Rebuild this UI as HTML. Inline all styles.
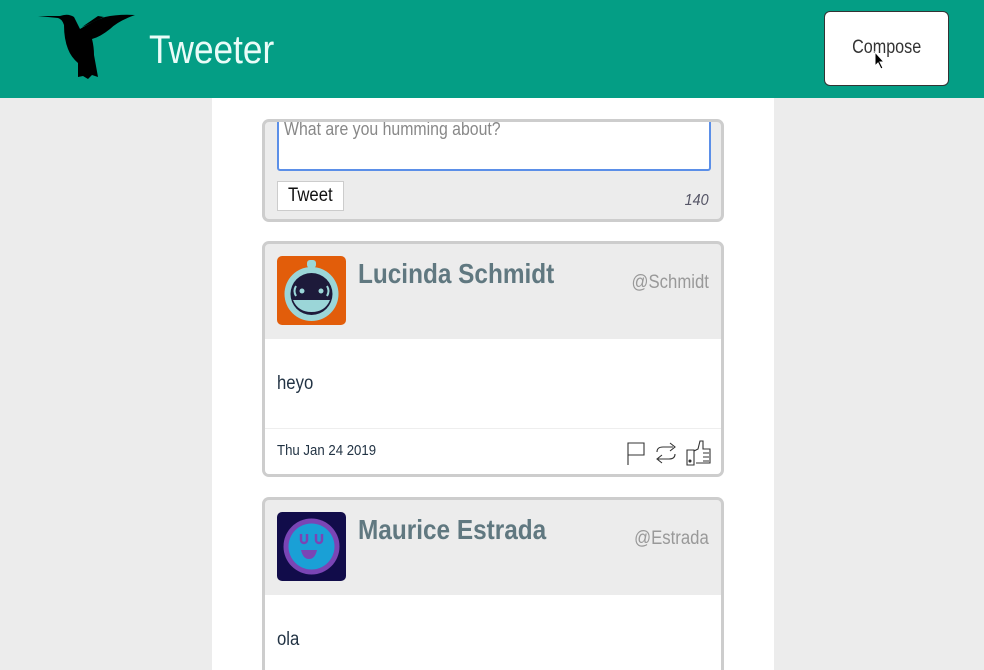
<!DOCTYPE html>
<html style="width:984px;height:670px;overflow:hidden"><head><meta charset="utf-8"><style>
*{box-sizing:border-box;margin:0;padding:0}
body{width:984px;height:670px;overflow:hidden;background:#ececec;font-family:"Liberation Sans",sans-serif;position:relative}
.hdr{position:absolute;left:0;top:0;width:984px;height:98px;background:#049e85}
.title{position:absolute;left:149px;top:28px;font-size:40px;color:#eafcf8;transform:scaleX(.88);transform-origin:left}
.cbtn{position:absolute;left:824px;top:11px;width:125px;height:75px;background:#fff;border:1px solid #333;border-radius:6px;font-size:19px;color:#333;text-align:center;line-height:72px}
.cbtn span{display:inline-block;transform:scaleX(.85)}
.col{position:absolute;left:212px;top:98px;width:562px;height:572px;background:#fff}
.box{position:absolute;left:262px;width:462px;border:3px solid #cdcdcd;border-radius:7px;background:#ececec;overflow:hidden}
.ta{position:absolute;left:12px;top:-4px;width:434px;height:53px;background:#fff;border:2px solid #5b8fe8;border-radius:3px;font-size:18px;color:#888;padding:0 5px;line-height:18px;white-space:nowrap}
.ta span{display:inline-block;transform:scaleX(.88);transform-origin:left}
.tb{position:absolute;left:12px;top:59px;width:67px;height:30px;background:#fff;border:1px solid #ccc;font-size:19px;text-align:center;line-height:28px;color:#111}
.tb span{display:inline-block;transform:scaleX(.88)}
.cnt{position:absolute;right:12px;top:70px;font-size:16px;font-style:italic;color:#556;transform:scaleX(.9);transform-origin:right}
.av{position:absolute;left:12px;top:12px;width:69px;height:69px;border-radius:5px;overflow:hidden}
.nm{position:absolute;left:93px;top:14px;font-size:28px;font-weight:bold;color:#607880;transform:scaleX(.87);transform-origin:left;white-space:nowrap}
.hd{position:absolute;right:12px;top:28px;font-size:19px;color:#999;transform:scaleX(.88);transform-origin:right}
.bd{position:absolute;left:0;top:95px;width:100%;height:90px;background:#fff;border-bottom:1px solid #eee;font-size:19px;color:#234;padding:34px 12px}
.bd span,.ft span{display:inline-block;transform:scaleX(.88);transform-origin:left}
.ft{position:absolute;left:0;top:185px;width:100%;height:48px;background:#fff;font-size:15px;color:#234;padding:13px 12px}
</style></head><body>
<div class="hdr">
<svg style="position:absolute;left:38px;top:11px" width="100" height="70" viewBox="0 0 100 70"><path d="M0 5 L22 5 Q30 2 36 6 L42 18 Q55 10 67 6 Q80 3 97 4 Q80 10 72 18 Q62 26 54 28 Q56 36 56 44 L60 66 L54 64 L50 68 L45 65 L40 66 L40 52 Q33 46 30 38 Q26 28 26 14 Q24 8 20 7 Z" fill="#000"/><path d="M44 16 L60 5 L66 6 Z" fill="#000"/></svg>
<div class="title">Tweeter</div>
<div class="cbtn"><span>Compose</span></div>
</div>
<div class="col"></div>
<div class="box" style="top:119px;height:103px">
<div class="ta"><span>What are you humming about?</span></div>
<div class="tb"><span>Tweet</span></div>
<div class="cnt">140</div>
</div>
<div class="box" style="top:241px;height:236px">
<div class="av" style="background:#e25d0a"><svg width="69" height="69"><circle cx="34.5" cy="38" r="27" fill="#9bd6d8"/><circle cx="34.5" cy="38" r="21" fill="#1d1a3a"/><rect x="30" y="4" width="9" height="8" rx="3" fill="#9bd6d8"/><path d="M16 44h37q-5 12-18.5 12T16 44z" fill="#9bd6d8"/><path d="M19 30q-3 5 0 10M50 30q3 5 0 10" stroke="#9bd6d8" stroke-width="2" fill="none"/><circle cx="25" cy="35" r="2.5" fill="#9bd6d8"/><circle cx="44" cy="35" r="2.5" fill="#9bd6d8"/></svg></div>
<div class="nm">Lucinda Schmidt</div>
<div class="hd">@Schmidt</div>
<div class="bd"><span>heyo</span></div>
<div class="ft"><span>Thu Jan 24 2019</span>
<svg style="position:absolute;right:10px;top:11px" width="86" height="26" viewBox="0 0 86 26" fill="none" stroke="#333" stroke-width="1.1"><path d="M3 25V3h16v12H3"/><path d="M32 12q0-5 6-5h10M45 3l5 4-5 4M50 14q0 5-6 5H33M37 15l-5 4 5 4"/><path d="M62 10h7v15h-7zM69 11l4-2 2-8h3v8h7v14h-14M78 13h6M78 17h6M78 21h6"/><circle cx="65" cy="21" r="1" fill="#333"/></svg>
</div>
</div>
<div class="box" style="top:497px;height:173px;border-bottom:none;border-radius:7px 7px 0 0">
<div class="av" style="background:#110c4a"><svg width="69" height="69"><circle cx="34.5" cy="34.5" r="28" fill="#7a45b5"/><circle cx="34.5" cy="34.5" r="23" fill="#1aa0d6"/><path d="M24 22v6a3 3 0 0 0 6 0v-6M39 22v6a3 3 0 0 0 6 0v-6" stroke="#7a45b5" stroke-width="2.5" fill="none"/><path d="M24 38h16q-2 9-8 9q-6 0-8-9z" fill="#7a45b5"/></svg></div>
<div class="nm">Maurice Estrada</div>
<div class="hd">@Estrada</div>
<div class="bd" style="height:80px"><span>ola</span></div>
</div>
<svg style="position:absolute;left:874px;top:51px" width="12" height="18" viewBox="0 0 12 18"><path d="M1 1v14l3-3 3 6 2-1-3-6h4z" fill="#000" stroke="#fff"/></svg>
</body></html>
